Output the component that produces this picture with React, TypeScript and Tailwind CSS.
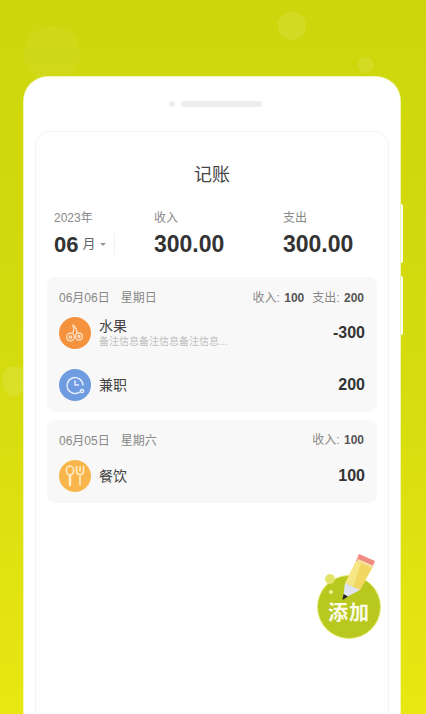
const font = { fontFamily: '"Liberation Sans", "Noto Sans CJK SC", sans-serif' };

function FruitIcon() {
  return (
    <svg width="20" height="20" viewBox="0 0 20 20" fill="none" stroke="#fde3c8" strokeWidth="1.3" strokeLinecap="round">
      <circle cx="5.5" cy="14" r="3.8" />
      <circle cx="5.5" cy="14" r="1.2" />
      <circle cx="14" cy="13.5" r="3.5" />
      <circle cx="14" cy="13.5" r="1" />
      <path d="M7.5 10.5 C9 8 9 5 8 2 M12 10 C12 7 10.5 4 8 2" />
    </svg>
  );
}

function ClockIcon() {
  return (
    <svg width="22" height="22" viewBox="0 0 22 22" fill="none" stroke="#e3edfb" strokeWidth="1.5" strokeLinecap="round">
      <path d="M15.5 18.2 A8 8 0 1 1 19 11" />
      <path d="M11 7 V11 H14.5" />
      <circle cx="18" cy="17" r="1.6" />
    </svg>
  );
}

function FoodIcon() {
  return (
    <svg width="22" height="24" viewBox="0 0 22 24" fill="none" stroke="#fdeecb" strokeWidth="1.5" strokeLinecap="round">
      <ellipse cx="6" cy="6.5" rx="3.6" ry="4.5" />
      <path d="M6 11 V21" strokeWidth="2.4" />
      <path d="M12.5 2.5 V7 C12.5 9.5 14 10.5 16 10.5 C18 10.5 19.5 9.5 19.5 7 V2.5 M16 2.5 V7 M16 11 V21" />
    </svg>
  );
}

function AddButton() {
  return (
    <div className="absolute left-[317px] top-[548px] w-[66px] h-[92px]">
      <div className="absolute left-0 bottom-[1px] w-[64px] h-[64px] rounded-full bg-[#b9c81f] border border-[#e6ec7a] flex items-center justify-center">
        <span className="text-[20px] font-bold text-[#fbfbe8] tracking-[1px] mt-[11px]">添加</span>
      </div>
      <div className="absolute left-[8px] top-[26px] w-[10px] h-[10px] rounded-full bg-[#e3e56a]" />
      <div className="absolute left-[12px] top-[42px] w-[4px] h-[4px] rounded-full bg-[#eef29a]" />
      <svg className="absolute left-[22px] top-[5px]" width="40" height="48" viewBox="0 0 40 48">
        <path d="M20 1 L36 8 L33 15 L17 8 Z" fill="#ee8c84" />
        <path d="M19 6 L34 12.5 L33 15 L18 8.5 Z" fill="#f7dfa0" />
        <path d="M17 8 L33 15 L21 37 L6 30 Z" fill="#f7e684" />
        <path d="M22 10 L33 15 L21 37 L14 34 Z" fill="#f2d863" />
        <path d="M6 30 L21 37 L4 46 Z" fill="#dfe3f2" />
        <path d="M4.5 41 L9 43.5 L3.5 47 Z" fill="#222" />
      </svg>
    </div>
  );
}

function Row({ icon, color, name, note, amount }: any) {
  return (
    <div className="flex items-center h-[32px]">
      <div className={`w-[32px] h-[32px] rounded-full flex items-center justify-center shrink-0 ${color}`}>{icon}</div>
      <div className="ml-[8px] flex-1">
        <div className="text-[14px] leading-[16px] text-[#444]">{name}</div>
        {note && <div className="mt-[2px] text-[10px] leading-[12px] text-[#bdbdbd]">{note}</div>}
      </div>
      <div className="text-[16px] font-bold text-[#333]">{amount}</div>
    </div>
  );
}

export default function App() {
  return (
    <div
      style={font}
      className="relative w-[426px] h-[714px] overflow-hidden pt-[77px] pl-[24px] pr-[26px] bg-gradient-to-b from-[#cdd60c] via-[#d4db0f] to-[#e9e713]"
    >
      <div className="absolute left-[24px] top-[26px] w-[56px] h-[56px] rounded-full bg-white/5" />
      <div className="absolute left-[278px] top-[12px] w-[28px] h-[28px] rounded-full bg-white/10" />
      <div className="absolute left-[358px] top-[57px] w-[16px] h-[16px] rounded-full bg-white/10" />
      <div className="absolute left-[3px] top-[366px] w-[22px] h-[30px] rounded-full bg-white/10" />
      <div className="absolute left-[400px] top-[204px] w-[3px] h-[59px] rounded-r-[2px] bg-white" />
      <div className="absolute left-[400px] top-[276px] w-[3px] h-[59px] rounded-r-[2px] bg-white" />

      <div className="relative h-[637px] bg-white rounded-t-[24px] pt-[24px] px-[11px] ring-1 ring-[#f3f4b0]">
        <div className="flex justify-center items-center gap-[6px] h-[6px] pl-[6px]">
          <div className="w-[6px] h-[6px] rounded-full bg-[#eeeeee]" />
          <div className="w-[81px] h-[6px] rounded-full bg-[#eeeeee]" />
        </div>

        <div className="mt-[24px] h-[600px] border border-[#f4f4f4] rounded-t-[14px] px-[11px]">
          <div className="pt-[30px] text-center text-[18px] leading-[26px] text-[#444]">记账</div>

          <div className="mt-[22px] flex pl-[7px]">
            <div className="w-[100px]">
              <div className="text-[12px] leading-[16px] text-[#888]">2023年</div>
              <div className="mt-[5px] flex items-center h-[26px]">
                <span className="text-[22px] font-bold text-[#333]">06</span>
                <span className="ml-[4px] text-[13px] text-[#666]">月</span>
                <span className="ml-[4px] mt-[1px] border-x-[3px] border-x-transparent border-t-[3px] border-t-[#999]" />
                <span className="ml-[8px] w-px h-[20px] bg-[#f0f0f0]" />
              </div>
            </div>
            <div className="w-[129px]">
              <div className="text-[12px] leading-[16px] text-[#888]">收入</div>
              <div className="mt-[5px] text-[23px] leading-[26px] font-bold text-[#333]">300.00</div>
            </div>
            <div>
              <div className="text-[12px] leading-[16px] text-[#888]">支出</div>
              <div className="mt-[5px] text-[23px] leading-[26px] font-bold text-[#333]">300.00</div>
            </div>
          </div>

          <div className="mt-[20px] h-[135px] bg-[#f8f8f8] rounded-[8px] px-[12px] pt-[13px]">
            <div className="flex justify-between items-center h-[16px] text-[12px] text-[#888]">
              <span>06月06日<span className="ml-[11px]">星期日</span></span>
              <span className="mr-[1px]">
                收入: <b className="ml-[1px] text-[#555]">100</b>
                <span className="ml-[8px]">支出: </span><b className="ml-[1px] text-[#555]">200</b>
              </span>
            </div>
            <div className="mt-[11px]">
              <Row icon={<FruitIcon />} color="bg-[#f5923e]" name="水果" note="备注信息备注信息备注信息..." amount="-300" />
            </div>
            <div className="mt-[20px]">
              <Row icon={<ClockIcon />} color="bg-[#6f9be0]" name="兼职" amount="200" />
            </div>
          </div>

          <div className="mt-[8px] h-[83px] bg-[#f8f8f8] rounded-[8px] px-[12px] pt-[13px]">
            <div className="flex justify-between items-center h-[16px] text-[12px] text-[#888]">
              <span>06月05日<span className="ml-[11px]">星期六</span></span>
              <span className="mr-[1px] -mt-[2px]">收入: <b className="ml-[1px] text-[#555]">100</b></span>
            </div>
            <div className="mt-[11px]">
              <Row icon={<FoodIcon />} color="bg-[#f9b64d]" name="餐饮" amount="100" />
            </div>
          </div>
        </div>
      </div>

      <AddButton />
    </div>
  );
}
